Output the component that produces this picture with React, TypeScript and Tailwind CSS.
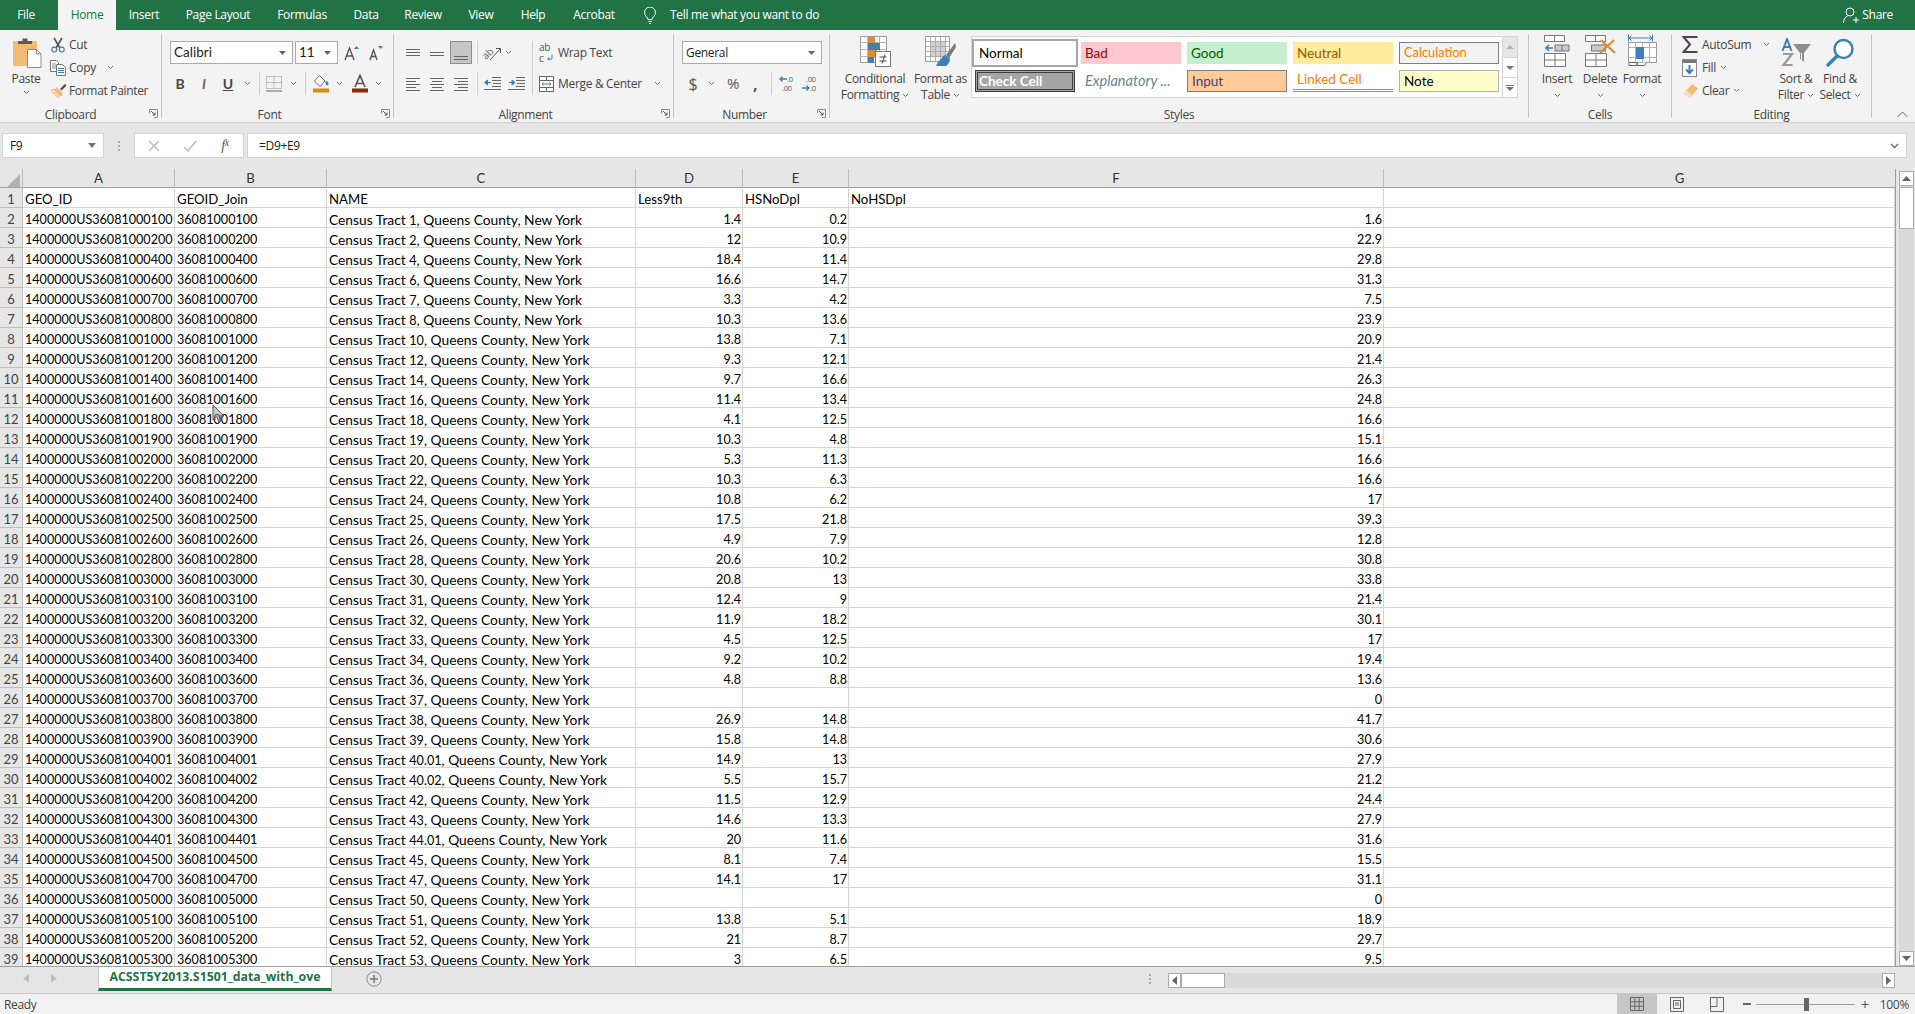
import type { ReactNode } from 'react';

const ui = 'font-["Open_Sans","Noto_Sans",sans-serif] tracking-[-0.02em]';
const cellFont = 'font-["Lato","Carlito",sans-serif] tracking-normal';

// suffix, tract, Less9th, HSNoDpl, NoHSDpl
const rows: [string, string, string, string, string][] = [
  ['000100', '1', '1.4', '0.2', '1.6'],
  ['000200', '2', '12', '10.9', '22.9'],
  ['000400', '4', '18.4', '11.4', '29.8'],
  ['000600', '6', '16.6', '14.7', '31.3'],
  ['000700', '7', '3.3', '4.2', '7.5'],
  ['000800', '8', '10.3', '13.6', '23.9'],
  ['001000', '10', '13.8', '7.1', '20.9'],
  ['001200', '12', '9.3', '12.1', '21.4'],
  ['001400', '14', '9.7', '16.6', '26.3'],
  ['001600', '16', '11.4', '13.4', '24.8'],
  ['001800', '18', '4.1', '12.5', '16.6'],
  ['001900', '19', '10.3', '4.8', '15.1'],
  ['002000', '20', '5.3', '11.3', '16.6'],
  ['002200', '22', '10.3', '6.3', '16.6'],
  ['002400', '24', '10.8', '6.2', '17'],
  ['002500', '25', '17.5', '21.8', '39.3'],
  ['002600', '26', '4.9', '7.9', '12.8'],
  ['002800', '28', '20.6', '10.2', '30.8'],
  ['003000', '30', '20.8', '13', '33.8'],
  ['003100', '31', '12.4', '9', '21.4'],
  ['003200', '32', '11.9', '18.2', '30.1'],
  ['003300', '33', '4.5', '12.5', '17'],
  ['003400', '34', '9.2', '10.2', '19.4'],
  ['003600', '36', '4.8', '8.8', '13.6'],
  ['003700', '37', '', '', '0'],
  ['003800', '38', '26.9', '14.8', '41.7'],
  ['003900', '39', '15.8', '14.8', '30.6'],
  ['004001', '40.01', '14.9', '13', '27.9'],
  ['004002', '40.02', '5.5', '15.7', '21.2'],
  ['004200', '42', '11.5', '12.9', '24.4'],
  ['004300', '43', '14.6', '13.3', '27.9'],
  ['004401', '44.01', '20', '11.6', '31.6'],
  ['004500', '45', '8.1', '7.4', '15.5'],
  ['004700', '47', '14.1', '17', '31.1'],
  ['005000', '50', '', '', '0'],
  ['005100', '51', '13.8', '5.1', '18.9'],
  ['005200', '52', '21', '8.7', '29.7'],
  ['005300', '53', '3', '6.5', '9.5'],
];

const gridCols = 'grid grid-cols-[23px_152px_152px_309px_107px_106px_535px_511px]';
const tabs = [
  ['Insert', 'w-[56px]'],
  ['Page Layout', 'w-[92px]'],
  ['Formulas', 'w-[76px]'],
  ['Data', 'w-[52px]'],
  ['Review', 'w-[62px]'],
  ['View', 'w-[54px]'],
  ['Help', 'w-[50px]'],
  ['Acrobat', 'w-[72px]'],
];

function Chev({ color = '#6a6a6a' }: { color?: string }) {
  return (
    <svg width="7" height="5" viewBox="0 0 7 5" className="shrink-0">
      <path d="M1 1l2.5 2.5L6 1" fill="none" stroke={color} strokeWidth="1" />
    </svg>
  );
}

function Slot({ className, children }: { className: string; children?: ReactNode }) {
  return <div className={`flex h-[23px] shrink-0 items-center justify-center ${className}`}>{children}</div>;
}

function Sep() {
  return <div className="h-[23px] w-px shrink-0 bg-[#d0d0d0]" />;
}

function Launcher() {
  return (
    <svg width="9" height="9" viewBox="0 0 9 9" className="absolute bottom-0 right-[3px]">
      <path d="M.5 4V.5H8.5V8.5H5" fill="none" stroke="#8a8a8a" />
      <path d="M2 2l4 4M6 3.5V6H3.5" fill="none" stroke="#555" />
    </svg>
  );
}

function Group({ label, className, labelPad = '', launcher, children }: { label: string; className: string; labelPad?: string; launcher?: boolean; children: ReactNode }) {
  return (
    <div className={`relative flex h-[84px] shrink-0 flex-col border-r border-[#c6c6c6] ${className}`}>
      <div className="min-h-0 flex-1">{children}</div>
      <div className={`h-[18px] pt-[7px] text-center text-[12px] leading-[16px] text-[#444] ${labelPad}`}>{label}</div>
      {launcher && <Launcher />}
    </div>
  );
}

function Lines({ ys }: { ys: [number, number, number][] }) {
  return (
    <svg width="16" height="14" viewBox="0 0 16 14">
      {ys.map(([y, a, b], i) => (
        <path key={i} d={`M${a} ${y}.5H${b}`} stroke="#666" strokeWidth="1" />
      ))}
    </svg>
  );
}

function PasteIcon() {
  return (
    <svg width="32" height="32" viewBox="0 0 32 32">
      <rect x="2" y="4" width="24" height="25" rx="1" fill="#f3bc76" />
      <path d="M7 7V4h4.5V1.5h5V4H21v3z" fill="#5c585c" />
      <path d="M16.5 12.5h9l4.5 4.5v13.5H16.5z" fill="#fff" stroke="#8c8c8c" />
      <path d="M25.5 12.5v4.5H30" fill="none" stroke="#8c8c8c" />
    </svg>
  );
}

function ScissorsIcon() {
  return (
    <svg width="16" height="16" viewBox="0 0 16 16">
      <path d="M4 1l6 10M12 1L6 11" stroke="#555" strokeWidth="1.6" fill="none" />
      <circle cx="4.2" cy="12.6" r="2.4" fill="#fff" stroke="#3d7fb5" strokeWidth="1.2" />
      <circle cx="11.8" cy="12.6" r="2.4" fill="#fff" stroke="#3d7fb5" strokeWidth="1.2" />
    </svg>
  );
}

function CopyIcon() {
  return (
    <svg width="16" height="16" viewBox="0 0 16 16">
      <path d="M.5.5h6l2 2v9h-8z" fill="#fff" stroke="#777" />
      <path d="M2 4h4M2 6h4M2 8h4" stroke="#888" />
      <path d="M6.5 4.5h6l3 3v8h-9z" fill="#fff" stroke="#777" />
      <path d="M8 8.5h6M8 10.5h6M8 12.5h6" stroke="#3d7fb5" />
    </svg>
  );
}

function PainterIcon() {
  return (
    <svg width="17" height="16" viewBox="0 0 17 16">
      <path d="M10 6l5-5 1.5 1.5-5 5z" fill="#4a464a" />
      <path d="M6.5 4L13 10.5 10.5 13 5 7z" fill="#f3bc76" />
      <path d="M5.5 6L11 12 8 15.5 1 9 3.5 9z" fill="#f6cfa0" />
      <path d="M1 8l3-2 8 7" fill="none" stroke="#e8a050" />
    </svg>
  );
}

function GrowA({ up }: { up: boolean }) {
  return (
    <svg width="16" height="16" viewBox="0 0 16 16">
      <path d={up ? 'M1 15L5.5 3 10 15M2.7 11h5.6' : 'M2 15L5.5 5 9 15M3.3 11.5h4.4'} fill="none" stroke="#555" strokeWidth="1.4" />
      <path d={up ? 'M10 4l2.5-3L15 4z' : 'M10 1h5l-2.5 3z'} fill="#3d7fb5" />
    </svg>
  );
}

function BorderIcon() {
  return (
    <svg width="16" height="16" viewBox="0 0 16 16">
      <path d="M.5.5h15v12H.5zM.5 6.5h15M8 .5v12" fill="none" stroke="#8a8a8a" strokeDasharray="1 1" />
      <path d="M0 15h16" stroke="#666" />
    </svg>
  );
}

function FillIcon() {
  return (
    <svg width="17" height="19" viewBox="0 0 17 19">
      <path d="M6.5 1.5L1.5 7 7 12.5 12 7z" fill="#fff" stroke="#666" />
      <path d="M12 7.5c2-.8 3.5.2 3.5 2 0 1-.6 2-1.5 2-.8 0-1.2-.6-1.2-1.4 0-.8-.4-1.8-.8-2.6z" fill="#3d7fb5" />
      <rect x="0" y="14.5" width="16" height="4" fill="#e08a10" />
    </svg>
  );
}

function FontColorIcon() {
  return (
    <svg width="16" height="19" viewBox="0 0 16 19">
      <path d="M3 13L8 1.5 13 13M4.6 9.5h6.8" fill="none" stroke="#555" strokeWidth="1.7" />
      <rect x="0" y="14.5" width="16" height="4" fill="#8a2800" />
    </svg>
  );
}

function OrientIcon() {
  return (
    <svg width="22" height="20" viewBox="0 0 22 20" className="overflow-visible">
      <g transform="rotate(-42 8 10)">
        <text x="1" y="13" fontSize="10" fill="#666" fontFamily="Open Sans, sans-serif">ab</text>
      </g>
      <path d="M9 17L19 6M15 5.5H19.5V10" fill="none" stroke="#555" />
    </svg>
  );
}

function Indent({ flip }: { flip?: boolean }) {
  return (
    <svg width="17" height="15" viewBox="0 0 17 15">
      <path d="M8 1.5h9M8 4.5h9M9 7.5h8M8 10.5h9M0 13.5h17" stroke="#666" />
      <path d={flip ? 'M1 6.5h4M4 4l3 2.5L4 9z' : 'M7 6.5H3M3.5 4L.5 6.5 3.5 9z'} stroke="#3d7fb5" fill="#3d7fb5" />
    </svg>
  );
}

function WrapIcon() {
  return (
    <svg width="17" height="22" viewBox="0 0 17 22" className="overflow-visible">
      <text x="0" y="9" fontSize="10" fill="#555" fontFamily="Open Sans, sans-serif">ab</text>
      <text x="0" y="20" fontSize="10" fill="#555" fontFamily="Open Sans, sans-serif">c</text>
      <path d="M13 12.5v4.5H9M10.5 15.5L8.5 17l2 1.5" fill="none" stroke="#3d7fb5" />
    </svg>
  );
}

function MergeIcon() {
  return (
    <svg width="15" height="16" viewBox="0 0 15 16">
      <path d="M.5.5h14v15H.5zM.5 4.5h14M.5 11.5h14M7.5.5v4M7.5 11.5v4" fill="#fff" stroke="#666" />
      <path d="M3 8h9M4.5 6.5L3 8l1.5 1.5M10.500 6.5L12 8l-1.5 1.5" fill="none" stroke="#3d7fb5" />
    </svg>
  );
}

function DecimalIcon({ more }: { more?: boolean }) {
  return (
    <svg width="19" height="19" viewBox="0 0 19 19" className="overflow-visible">
      {more ? (
        <>
          <text x="5" y="8" fontSize="7.5" fill="#555" fontFamily="Open Sans, sans-serif">.00</text>
          <path d="M1 14h7M5.5 11.5L8 14l-2.5 2.5" fill="none" stroke="#3d7fb5" strokeWidth="1.3" />
          <text x="9" y="17" fontSize="7.5" fill="#555" fontFamily="Open Sans, sans-serif">.0</text>
        </>
      ) : (
        <>
          <path d="M9 5H2M4.500 2.500L2 5l2.500 2.500" fill="none" stroke="#3d7fb5" strokeWidth="1.3" />
          <text x="9" y="8" fontSize="7.5" fill="#555" fontFamily="Open Sans, sans-serif">.0</text>
          <text x="4" y="17" fontSize="7.5" fill="#555" fontFamily="Open Sans, sans-serif">.00</text>
        </>
      )}
    </svg>
  );
}

function ConditionalIcon() {
  return (
    <svg width="31" height="31" viewBox="0 0 31 31">
      <path d="M.5.5h26v26H.5z" fill="#fff" stroke="#9a9a9a" />
      <path d="M.5 6.5h26M.5 13.5h26M.5 20.5h26M7.5.5v26M19.5.5v26" stroke="#b5b5b5" fill="none" />
      <rect x="8" y="1" width="7" height="6" fill="#df8a36" />
      <rect x="8" y="7" width="12" height="7" fill="#3f7fb8" />
      <rect x="8" y="14" width="9" height="7" fill="#df8a36" />
      <rect x="8" y="21" width="6" height="6" fill="#3f7fb8" />
      <rect x="15.5" y="15.5" width="15" height="15" fill="#fff" stroke="#777" />
      <path d="M19.5 21h7M19.5 25h7M25 18.5l-3 9" stroke="#444" fill="none" />
    </svg>
  );
}

function TableIcon() {
  return (
    <svg width="31" height="31" viewBox="0 0 31 31">
      <path d="M.5.5h24v25H.5z" fill="#fff" stroke="#9a9a9a" />
      <rect x="5" y="6" width="15" height="15" fill="#cfcfcf" />
      <path d="M.5 5.5h24M.5 10.5h24M.5 15.5h24M.5 20.5h24M5.5.5v25M10.5.5v25M15.5.5v25M20.5.5v25" stroke="#adadad" fill="none" />
      <path d="M30 7L21 19l3 3 7-11z" fill="#7a7a7a" />
      <path d="M20 19c-3 1-3 4-5 5-2 1-4 6-4 6h10c3-2 4-5 3-8z" fill="#3f7fb8" />
    </svg>
  );
}

function MiniGrid() {
  return <path d="M.5 18.5h21v13H.5zM.5 25h21M11 18.5v13" fill="#fff" stroke="#777" />;
}

function InsertIcon() {
  return (
    <svg width="26" height="32" viewBox="0 0 26 32">
      <path d="M.5.5h20v6H.5zM10.5.5v6" fill="#fff" stroke="#777" />
      <rect x="11" y="10" width="14" height="6" fill="#c9c9c9" stroke="#777" />
      <path d="M18 10v6" stroke="#777" />
      <path d="M9 13H2M5 10l-3 3 3 3" fill="none" stroke="#3d7fb5" strokeWidth="1.6" />
      <MiniGrid />
    </svg>
  );
}

function DeleteIcon() {
  return (
    <svg width="31" height="32" viewBox="0 0 31 32">
      <path d="M.5.5h20v6H.5zM10.5.5v6" fill="#fff" stroke="#777" />
      <rect x="6.5" y="10" width="14" height="6" fill="#c9c9c9" stroke="#777" />
      <path d="M16 5l14 13M29 5L15 18" stroke="#df8a36" strokeWidth="2.2" fill="none" />
      <MiniGrid />
    </svg>
  );
}

function FormatIcon() {
  return (
    <svg width="29" height="33" viewBox="0 0 29 33">
      <path d="M1 4h23M3.5 1.5L1 4l2.5 2.5M21.5 1.5L24 4l-2.5 2.5M.5 .5v7M24.5 .5v7" fill="none" stroke="#3d7fb5" />
      <path d="M.5 8.5h28v20H.5z" fill="#fff" stroke="#9a9a9a" />
      <path d="M.5 13.5h28M.5 23.5h28M7.5 8.5v20M14.5 8.5v20M21.5 8.5v20" fill="none" stroke="#b5b5b5" />
      <rect x="8" y="13" width="8" height="12" fill="#3f7fb8" />
      <path d="M1 29v2.5h7.5l1-3h-8M9 29v2.5h7.5l2-3" fill="#fff" stroke="#666" />
    </svg>
  );
}

function SigmaIcon() {
  return (
    <svg width="17" height="17" viewBox="0 0 17 17">
      <path d="M15.5 1H1.6L8 8.5 1.6 16h13.9" fill="none" stroke="#4c464c" strokeWidth="2" />
    </svg>
  );
}

function FillDownIcon() {
  return (
    <svg width="15" height="18" viewBox="0 0 15 18">
      <rect x=".5" y=".5" width="14" height="17" fill="#fff" stroke="#8a8a8a" />
      <rect x="1" y="1" width="13" height="3" fill="#777" />
      <path d="M7.5 6v8M4 10.5l3.5 3.5 3.5-3.5" fill="none" stroke="#3d7fb5" strokeWidth="2" />
    </svg>
  );
}

function EraserIcon() {
  return (
    <svg width="17" height="16" viewBox="0 0 17 16">
      <path d="M10 1l6 4.5-8 9L2 10z" fill="#f3bc76" />
      <path d="M4.5 7L10 11.5 7.5 15 1 10.5z" fill="#fadcc2" />
    </svg>
  );
}

function SortIcon() {
  return (
    <svg width="31" height="29" viewBox="0 0 31 29">
      <path d="M1.5 13L6 1l4.5 12M3 9h6" fill="none" stroke="#3d7fb5" strokeWidth="2" />
      <path d="M2 16h9L2.5 27h9" fill="none" stroke="#9a9a9a" strokeWidth="2.2" />
      <path d="M12 6h18l-7 9v9l-4-3v-6z" fill="#8f8f8f" />
      <path d="M20.5 15v7" stroke="#fff" />
    </svg>
  );
}

function FindIcon() {
  return (
    <svg width="29" height="29" viewBox="0 0 29 29">
      <circle cx="17.5" cy="11" r="9" fill="#fff" stroke="#3d7fb5" strokeWidth="2.4" />
      <path d="M11 18L2 27" stroke="#3d7fb5" strokeWidth="3.4" strokeLinecap="round" />
    </svg>
  );
}

function BigButton({ icon, lines, className }: { icon: ReactNode; lines: [string, string]; className: string }) {
  return (
    <div className={`flex shrink-0 flex-col items-center ${className}`}>
      <div className="flex h-[33px] items-end justify-center">{icon}</div>
      <div className="mt-[4px] whitespace-nowrap text-[12px] leading-[16px] text-[#444]">{lines[0]}</div>
      <div className="flex h-[16px] items-center gap-[3px] whitespace-nowrap text-[12px] leading-[16px] text-[#444]">
        {lines[1]}
        <Chev />
      </div>
    </div>
  );
}

function CellButton({ icon, label, className }: { icon: ReactNode; label: string; className: string }) {
  return (
    <div className={`flex shrink-0 flex-col items-center ${className}`}>
      <div className="flex h-[33px] items-end justify-center">{icon}</div>
      <div className="mt-[4px] text-[12px] leading-[16px] text-[#444]">{label}</div>
      <div className="flex h-[16px] items-center"><Chev /></div>
    </div>
  );
}

const styleBox = `flex h-[22px] items-center px-[4px] text-[13.5px] whitespace-nowrap ${cellFont}`;

function Ribbon() {
  return (
    <div className="flex h-[93px] shrink-0 items-start border-b border-[#d2d2d2] bg-[#f3f3f3] pt-[4px] text-[12px] text-[#444]">
      <Group label="Clipboard" className="w-[162px]" labelPad="pr-[20px]" launcher>
        <div className="flex">
          <div className="flex w-[50px] shrink-0 flex-col items-center pt-[3px]">
            <div className="ml-[4px] h-[32px]"><PasteIcon /></div>
            <div className="ml-[2px] mt-[2px] leading-[16px]">Paste</div>
            <div className="ml-[2px] mt-[3px]"><Chev /></div>
          </div>
          <div className="-mt-px flex flex-col">
            <div className="flex h-[23px] items-center"><div className="w-[19px]"><ScissorsIcon /></div>Cut</div>
            <div className="flex h-[23px] items-center"><div className="w-[19px]"><CopyIcon /></div>Copy<div className="ml-[11px]"><Chev /></div></div>
            <div className="flex h-[23px] items-center whitespace-nowrap"><div className="w-[19px]"><PainterIcon /></div>Format Painter</div>
          </div>
        </div>
      </Group>

      <Group label="Font" className="w-[232px]" labelPad="pr-[16px]" launcher>
        <div className="flex h-[30px] items-end pl-[8px]">
          <div className={`flex h-[23px] w-[123px] items-center justify-between border border-[#ababab] bg-white pl-[3px] pr-[6px] text-[13.5px] text-[#222] ${cellFont}`}>
            Calibri
            <svg width="7" height="4" viewBox="0 0 7 4"><path d="M0 0h7L3.5 4z" fill="#666" /></svg>
          </div>
          <div className={`ml-[2px] flex h-[23px] w-[43px] items-center justify-between border border-[#ababab] bg-white pl-[3px] pr-[6px] text-[13.5px] text-[#222] ${cellFont}`}>
            11
            <svg width="7" height="4" viewBox="0 0 7 4"><path d="M0 0h7L3.5 4z" fill="#666" /></svg>
          </div>
          <Slot className="ml-[2px] w-[24px]"><GrowA up /></Slot>
          <Slot className="w-[24px]"><GrowA up={false} /></Slot>
        </div>
        <div className="mt-[8px] flex items-center pl-[8px]">
          <Slot className={`w-[20px] text-[14px] font-bold text-[#4c464c] ${cellFont}`}>B</Slot>
          <Slot className={`w-[28px] text-[14px] font-bold italic text-[#666] ${cellFont}`}>I</Slot>
          <Slot className={`w-[20px] text-[14px] font-bold text-[#4c464c] underline ${cellFont}`}>U</Slot>
          <Slot className="w-[18px]"><Chev /></Slot>
          <div className="w-[3px]" />
          <Sep />
          <Slot className="w-[28px]"><BorderIcon /></Slot>
          <Slot className="w-[10px]"><Chev /></Slot>
          <div className="w-[7px]" />
          <Sep />
          <Slot className="w-[30px]"><FillIcon /></Slot>
          <Slot className="w-[6px]"><Chev /></Slot>
          <div className="w-[6px]" />
          <Slot className="w-[24px]"><FontColorIcon /></Slot>
          <Slot className="w-[12px]"><Chev /></Slot>
        </div>
      </Group>

      <Group label="Alignment" className="w-[280px]" labelPad="pr-[16px]" launcher>
        <div className="flex pt-[7px]">
          <div className="w-[138px] shrink-0 pl-[7px]">
            <div className="flex">
              <Slot className="w-[24px]"><Lines ys={[[3, 1, 15], [6, 1, 15], [9, 1, 15]]} /></Slot>
              <Slot className="w-[24px]"><Lines ys={[[6, 1, 15], [9, 1, 15]]} /></Slot>
              <Slot className="ml-px w-[22px] border border-[#8f8f8f] bg-[#c6c6c6]"><div className="mt-[8px]"><Lines ys={[[6, 1, 15], [9, 1, 15]]} /></div></Slot>
              <div className="w-[5px]" />
              <Sep />
              <div className="w-[2px]" />
              <Slot className="w-[24px]"><OrientIcon /></Slot>
              <Slot className="w-[8px]"><Chev /></Slot>
            </div>
            <div className="mt-[8px] flex">
              <Slot className="w-[24px]"><Lines ys={[[1, 1, 15], [4, 1, 11], [7, 1, 15], [10, 1, 11], [13, 1, 15]]} /></Slot>
              <Slot className="w-[24px]"><Lines ys={[[1, 1, 15], [4, 3, 13], [7, 1, 15], [10, 3, 13], [13, 1, 15]]} /></Slot>
              <Slot className="w-[24px]"><Lines ys={[[1, 1, 15], [4, 5, 15], [7, 1, 15], [10, 5, 15], [13, 1, 15]]} /></Slot>
              <div className="w-[4px]" />
              <Sep />
              <div className="w-[2px]" />
              <Slot className="w-[24px]"><Indent /></Slot>
              <Slot className="w-[24px]"><Indent flip /></Slot>
            </div>
          </div>
          <div className="h-[54px] w-px shrink-0 bg-[#d0d0d0]" />
          <div className="pl-[6px]">
            <div className="flex h-[23px] items-center whitespace-nowrap"><div className="w-[19px]"><WrapIcon /></div>Wrap Text</div>
            <div className="mt-[8px] flex h-[23px] items-center whitespace-nowrap">
              <div className="w-[19px]"><MergeIcon /></div>
              <div className="w-[91px]">Merge &amp; Center</div>
              <div className="flex w-[16px] justify-center"><Chev /></div>
            </div>
          </div>
        </div>
      </Group>

      <Group label="Number" className="w-[156px]" labelPad="pr-[14px]" launcher>
        <div className="flex flex-col pl-[8px] pt-[7px]">
          <div className="flex h-[23px] w-[140px] items-center justify-between border border-[#ababab] bg-white pl-[3px] pr-[6px] text-[#222]">
            General
            <svg width="7" height="4" viewBox="0 0 7 4"><path d="M0 0h7L3.5 4z" fill="#666" /></svg>
          </div>
          <div className="mt-[8px] flex">
            <Slot className="w-[22px] text-[16px] text-[#555]">$</Slot>
            <Slot className="w-[14px]"><Chev /></Slot>
            <Slot className="w-[30px] text-[15px] text-[#555]">%</Slot>
            <Slot className="w-[14px] text-[16px] font-bold text-[#555]">,</Slot>
            <div className="w-[9px]" />
            <Sep />
            <div className="w-[3px]" />
            <Slot className="w-[24px]"><DecimalIcon /></Slot>
            <Slot className="w-[22px]"><DecimalIcon more /></Slot>
          </div>
        </div>
      </Group>

      <Group label="Styles" className="w-[699px]">
        <div className="flex pl-[10px]">
          <BigButton className="w-[70px]" icon={<ConditionalIcon />} lines={['Conditional', 'Formatting']} />
          <BigButton className="w-[61px]" icon={<TableIcon />} lines={['Format as', 'Table']} />
          <div className="mt-[2px] flex h-[62px] w-[547px] shrink-0 border border-[#d4d4d4] bg-white">
            <div className="grid flex-1 grid-cols-[100px_100px_100px_100px_100px] grid-rows-[22px_22px] gap-[6px] pl-[3px] pt-[5px]">
              <div className={`${styleBox} bg-white text-black outline-2 outline-offset-1 outline-[#a6a6a6]`}>Normal</div>
              <div className={`${styleBox} bg-[#ffc7ce] text-[#9c0006]`}>Bad</div>
              <div className={`${styleBox} bg-[#c6efce] text-[#006100]`}>Good</div>
              <div className={`${styleBox} bg-[#ffeb9c] text-[#9c5700]`}>Neutral</div>
              <div className={`${styleBox} !text-[12.8px] border border-[#7f7f7f] bg-[#f2f2f2] text-[#fa7d00]`}>Calculation</div>
              <div className={`${styleBox} !px-px border-[3px] border-double border-[#3f3f3f] bg-[#a5a5a5] font-bold text-white`}>Check Cell</div>
              <div className={`${styleBox} !text-[14.5px] italic text-[#6b8490]`}>Explanatory ...</div>
              <div className={`${styleBox} border border-[#7f7f7f] bg-[#ffcc99] text-[#3f3f76]`}>Input</div>
              <div className={`${styleBox} border-b-[3px] border-double border-[#fa7d00] text-[#fa7d00]`}>Linked Cell</div>
              <div className={`${styleBox} border border-[#b2b2b2] bg-[#ffffcc] text-black`}>Note</div>
            </div>
            <div className="flex w-[15px] shrink-0 flex-col border-l border-[#d4d4d4]">
              <div className="flex h-[21px] items-center justify-center border-b border-[#d4d4d4] bg-[#e6e6e6]">
                <svg width="8" height="4" viewBox="0 0 8 4"><path d="M0 4h8L4 0z" fill="#b5b5b5" /></svg>
              </div>
              <div className="flex h-[20px] items-center justify-center border-b border-[#d4d4d4]">
                <svg width="8" height="4" viewBox="0 0 8 4"><path d="M0 0h8L4 4z" fill="#777" /></svg>
              </div>
              <div className="flex flex-1 flex-col items-center justify-center gap-px">
                <div className="h-px w-[8px] bg-[#777]" />
                <svg width="8" height="4" viewBox="0 0 8 4"><path d="M0 0h8L4 4z" fill="#777" /></svg>
              </div>
            </div>
          </div>
        </div>
      </Group>

      <Group label="Cells" className="w-[143px]">
        <div className="flex pl-[7px]">
          <CellButton className="w-[42px]" icon={<InsertIcon />} label="Insert" />
          <CellButton className="w-[44px]" icon={<DeleteIcon />} label="Delete" />
          <CellButton className="w-[40px]" icon={<FormatIcon />} label="Format" />
        </div>
      </Group>

      <Group label="Editing" className="w-[200px]">
        <div className="flex">
          <div className="-mt-px flex w-[102px] shrink-0 flex-col pl-[10px]">
            <div className="flex h-[23px] items-center whitespace-nowrap"><div className="w-[20px]"><SigmaIcon /></div>AutoSum<div className="ml-[12px]"><Chev /></div></div>
            <div className="flex h-[23px] items-center"><div className="w-[20px]"><FillDownIcon /></div>Fill<div className="ml-[4px]"><Chev /></div></div>
            <div className="flex h-[23px] items-center"><div className="w-[20px]"><EraserIcon /></div>Clear<div className="ml-[4px]"><Chev /></div></div>
          </div>
          <BigButton className="w-[44px]" icon={<SortIcon />} lines={['Sort &', 'Filter']} />
          <BigButton className="w-[44px]" icon={<FindIcon />} lines={['Find &', 'Select']} />
        </div>
      </Group>

      <div className="flex h-[84px] flex-1 items-end justify-end pr-[7px]">
        <svg width="11" height="7" viewBox="0 0 11 7"><path d="M.5 6l5-5 5 5" fill="none" stroke="#666" /></svg>
      </div>
    </div>
  );
}

function FormulaBar() {
  return (
    <div className="flex h-[46px] shrink-0 bg-[#e6e6e6] pt-[10px]">
      <div className="ml-[2px] flex h-[25px] w-[102px] items-center justify-between border border-[#d4d4d4] bg-white pl-[7px] pr-[7px] text-[12px] text-[#222]">
        F9
        <svg width="8" height="5" viewBox="0 0 8 5"><path d="M0 0h8L4 5z" fill="#777" /></svg>
      </div>
      <div className="flex h-[25px] w-[30px] flex-col items-center justify-center gap-[2px]">
        <div className="size-[2px] bg-[#aaa]" /><div className="size-[2px] bg-[#aaa]" /><div className="size-[2px] bg-[#aaa]" />
      </div>
      <div className="flex h-[25px] w-[110px] items-center border border-[#d4d4d4] bg-white">
        <div className="flex w-[38px] justify-center">
          <svg width="12" height="12" viewBox="0 0 12 12"><path d="M1 1l10 10M11 1L1 11" stroke="#bdbdbd" strokeWidth="1.5" /></svg>
        </div>
        <div className="flex w-[34px] justify-center">
          <svg width="14" height="12" viewBox="0 0 14 12"><path d="M1 7l4 4 8-10" fill="none" stroke="#bdbdbd" strokeWidth="1.5" /></svg>
        </div>
        <div className="flex w-[36px] justify-center font-['Liberation_Serif',serif] text-[14px] italic text-[#555]">
          f<span className="text-[10px]">x</span>
        </div>
      </div>
      <div className="ml-[3px] flex h-[25px] w-[1660px] items-center justify-between border border-[#d4d4d4] bg-white pl-[11px] pr-[7px] text-[12px] text-[#222]">
        =D9+E9
        <svg width="9" height="6" viewBox="0 0 9 6"><path d="M1 1l3.5 3.5L8 1" fill="none" stroke="#777" strokeWidth="1.6" /></svg>
      </div>
    </div>
  );
}

function Cell({ children, right }: { children?: ReactNode; right?: boolean }) {
  return (
    <div className={`h-[20px] overflow-hidden whitespace-nowrap border-b border-r border-[#d4d4d4] pl-[2px] pr-px pt-[4px] leading-[15px] text-black ${right ? 'text-right' : ''}`}>
      {children}
    </div>
  );
}

function RowHead({ n }: { n: number }) {
  return (
    <div className="h-[20px] border-b border-r border-[#bdbdbd] bg-[#e6e6e6] pt-[3px] text-center text-[13px] leading-[16px] text-[#444]">{n}</div>
  );
}

function Sheet() {
  return (
    <div className="flex h-[797px] shrink-0 bg-[#e6e6e6]">
      <div className={`w-[1896px] shrink-0 overflow-hidden border-r border-[#9f9f9f] text-[12.6px] ${cellFont}`}>
        <div className={`${gridCols} h-[19px] border-b border-[#9f9f9f] text-[13.2px] text-[#333]`}>
          <div className="flex items-end justify-end border-r border-[#bdbdbd] pb-[2px] pr-[2px]">
            <svg width="13" height="13" viewBox="0 0 13 13"><path d="M13 0v13H0z" fill="#b4b4b4" /></svg>
          </div>
          {['A', 'B', 'C', 'D', 'E', 'F'].map((c) => (
            <div key={c} className="flex items-center justify-center border-r border-[#bdbdbd]">{c}</div>
          ))}
          {/* G runs on under the scrollbar, so its letter sits right of the visible middle */}
          <div className="flex items-center justify-center pl-[80px]">G</div>
        </div>
        <div className="bg-white">
          <div className={`${gridCols} text-[13.2px]`}>
            <RowHead n={1} />
            {['GEO_ID', 'GEOID_Join', 'NAME', 'Less9th', 'HSNoDpl', 'NoHSDpl', ''].map((h, i) => (
              <Cell key={i}>{h}</Cell>
            ))}
          </div>
          {rows.map(([s, t, d, e, f], i) => (
            <div key={s} className={gridCols}>
              <RowHead n={i + 2} />
              <Cell>1400000US36081{s}</Cell>
              <Cell>36081{s}</Cell>
              <Cell><span className="text-[13.8px]">Census Tract </span>{t}<span className="text-[13.8px]">, Queens County, New York</span></Cell>
              <Cell right>{d}</Cell>
              <Cell right>{e}</Cell>
              <Cell right>{f}</Cell>
              <Cell />
            </div>
          ))}
        </div>
      </div>

      {/* vertical scrollbar */}
      <div className="ml-[3px] mt-[2px] flex h-[795px] w-[15px] shrink-0 flex-col bg-[#dadada]">
        <div className="flex h-[15px] items-center justify-center border border-[#ababab] bg-white">
          <svg width="9" height="5" viewBox="0 0 9 5"><path d="M0 5h9L4.5 0z" fill="#666" /></svg>
        </div>
        <div className="mt-px h-[42px] border border-[#ababab] bg-white" />
        <div className="flex-1" />
        <div className="flex h-[15px] items-center justify-center border border-[#ababab] bg-white">
          <svg width="9" height="5" viewBox="0 0 9 5"><path d="M0 0h9L4.5 5z" fill="#666" /></svg>
        </div>
      </div>
    </div>
  );
}

function TabBar() {
  return (
    <div className="flex h-[28px] shrink-0 border-b border-t border-b-[#c8c8c8] border-t-[#9f9f9f] bg-[#e6e6e6]">
      <div className="flex w-[98px] shrink-0 items-center pb-[3px]">
        <svg width="6" height="9" viewBox="0 0 6 9" className="ml-[23px]"><path d="M6 0v9L0 4.5z" fill="#c0c0c0" /></svg>
        <svg width="6" height="9" viewBox="0 0 6 9" className="ml-[22px]"><path d="M0 0v9l6-4.5z" fill="#c0c0c0" /></svg>
      </div>
      <div className="flex h-[24px] w-[234px] shrink-0 items-center justify-center border-x border-b-[3px] border-x-[#c8c8c8] border-b-[#217346] bg-white text-[12.3px] font-bold tracking-normal text-[#217346]">
        ACSST5Y2013.S1501_data_with_ove
      </div>
      <div className="flex w-[84px] shrink-0 items-center justify-center pb-[3px]">
        <svg width="16" height="16" viewBox="0 0 16 16"><circle cx="8" cy="8" r="7.2" fill="none" stroke="#8a8a8a" /><path d="M8 4v8M4 8h8" stroke="#777" strokeWidth="1.5" /></svg>
      </div>
      <div className="flex flex-1 items-center justify-end pb-[3px] pr-[17px]">
        <div className="flex flex-col gap-[2px]">
          <div className="size-[2px] bg-[#aaa]" /><div className="size-[2px] bg-[#aaa]" /><div className="size-[2px] bg-[#aaa]" />
        </div>
      </div>
      <div className="mr-[20px] mt-[6px] flex h-[15px] w-[727px] shrink-0 bg-[#dadada]">
        <div className="flex w-[13px] items-center justify-center border border-[#ababab] bg-white">
          <svg width="5" height="9" viewBox="0 0 5 9"><path d="M5 0v9L0 4.5z" fill="#666" /></svg>
        </div>
        <div className="w-[44px] border border-[#ababab] bg-white" />
        <div className="flex-1" />
        <div className="flex w-[13px] items-center justify-center border border-[#ababab] bg-white">
          <svg width="5" height="9" viewBox="0 0 5 9"><path d="M0 0v9l5-4.5z" fill="#666" /></svg>
        </div>
      </div>
    </div>
  );
}

function StatusBar() {
  return (
    <div className="flex h-[20px] shrink-0 items-center bg-[#f1f1f1] pl-[4px] text-[12px] text-[#444]">
      <span className="pt-[2px]">Ready</span>
      <div className="ml-auto flex h-full items-center pr-[6px]">
        <div className="flex h-full w-[40px] items-center justify-center bg-[#c6c6c6]">
          <svg width="14" height="14" viewBox="0 0 14 14"><path d="M.5.5h13v13H.5zM.5 4.8h13M.5 9.2h13M4.8.5v13M9.2.5v13" fill="none" stroke="#666" /></svg>
        </div>
        <div className="flex w-[40px] justify-center">
          <svg width="14" height="15" viewBox="0 0 14 15"><path d="M.5.5h13v14H.5z" fill="none" stroke="#666" /><path d="M3.5 3.5h7v8h-7zM5 6h4M5 8h4" fill="none" stroke="#666" /></svg>
        </div>
        <div className="flex w-[40px] justify-center">
          <svg width="14" height="15" viewBox="0 0 14 15"><path d="M.5.5h13v14H.5zM.5 9.5h6.5V.5" fill="none" stroke="#666" /></svg>
        </div>
        <div className="ml-[3px] flex w-[14px] justify-center"><div className="h-[2px] w-[8px] bg-[#666]" /></div>
        <div className="relative ml-[2px] flex h-[14px] w-[99px] items-center">
          <div className="h-px w-full bg-[#9f9f9f]" />
          <div className="absolute left-[48px] top-px h-[13px] w-[5px] bg-[#666]" />
        </div>
        <div className="ml-[3px] flex w-[14px] justify-center text-[15px] leading-none text-[#555]">+</div>
        <div className="w-[37px] pt-px text-right text-[#444]">100%</div>
      </div>
    </div>
  );
}

export default function App() {
  return (
    <div className={`relative flex h-[1014px] w-[1915px] flex-col overflow-hidden bg-[#e6e6e6] ${ui}`}>
      {/* title / tab strip */}
      <div className="flex h-[30px] shrink-0 items-center bg-[#217346] text-[12px] text-white">
        <div className="w-[58px] pr-[6px] text-center">File</div>
        <div className="flex h-full w-[58px] items-center justify-center bg-[#f3f3f3] text-[#217346]">Home</div>
        {tabs.map(([name, w]) => (
          <div key={name} className={`${w} text-center whitespace-nowrap`}>{name}</div>
        ))}
        <div className="ml-[10px] flex w-[20px] justify-center">
          <svg width="12" height="17" viewBox="0 0 12 17"><path d="M4 12.5c0-2-3.5-3.5-3.5-7a5.500 5.500 0 0111 0c0 3.500-3.500 5-3.500 7zM4.500 14.500h3M5 16.500h2" fill="none" stroke="#fff" /></svg>
        </div>
        <div className="ml-[10px]">Tell me what you want to do</div>
        <div className="ml-auto flex items-center gap-[3px] pr-[22px]">
          <svg width="16" height="17" viewBox="0 0 16 17"><circle cx="7" cy="5" r="4" fill="none" stroke="#fff" /><path d="M.5 16c0-3 1.5-6 4-7M10 13h6M13 10v6" fill="none" stroke="#fff" /></svg>
          Share
        </div>
      </div>
      <Ribbon />
      <FormulaBar />
      <Sheet />
      <TabBar />
      <StatusBar />
      {/* mouse pointer over the sheet */}
      <svg width="13" height="20" viewBox="0 0 13 20" className="absolute left-[212px] top-[404px]">
        <path d="M1 1v15l3.500-3.500L7 18l2.500-1-2.500-5h5z" fill="#9a9a9a" fillOpacity=".55" stroke="#555" />
      </svg>
    </div>
  );
}
